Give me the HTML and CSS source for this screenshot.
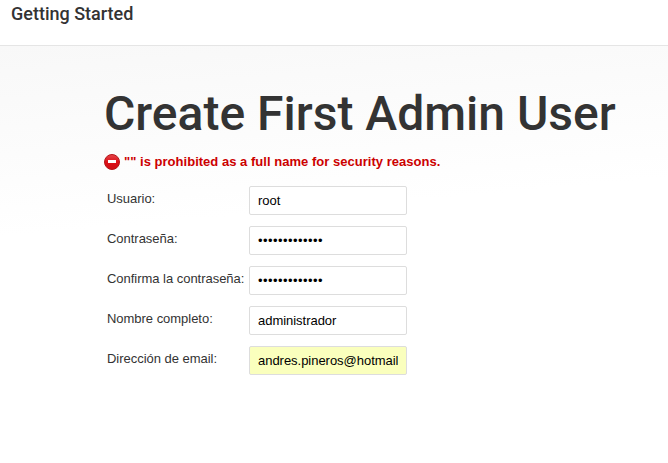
FILE: index.html
```html
<!DOCTYPE html>
<html lang="es">
<head>
<meta charset="utf-8">
<title>Getting Started</title>
<link rel="stylesheet" href="styles.css">
</head>
<body>
<header class="header"><h4 class="header-title">Getting Started</h4></header>
<main class="content">
  <h1 class="title">Create First Admin User</h1>
  <div class="error">
    <svg class="error-icon" width="16" height="16" viewBox="0 0 16 16" aria-hidden="true">
      <defs><linearGradient id="red" x1="0" y1="0" x2="0" y2="1"><stop offset="0" stop-color="#e6474b"/><stop offset=".5" stop-color="#dc1018"/><stop offset="1" stop-color="#d01016"/></linearGradient></defs>
      <circle cx="8" cy="8" r="7.5" fill="url(#red)" stroke="#b5161a"/>
      <rect x="4" y="6" width="8" height="3" fill="#fff"/>
    </svg>
    <span>"" is prohibited as a full name for security reasons.</span>
  </div>
  <form class="form">
    <label class="label" for="user">Usuario:</label>
    <input class="field" id="user" type="text" value="root">
    <label class="label" for="pass">Contraseña:</label>
    <input class="field password" id="pass" type="text" value="•••••••••••••">
    <label class="label" for="pass2">Confirma la contraseña:</label>
    <input class="field password" id="pass2" type="text" value="•••••••••••••">
    <label class="label" for="name">Nombre completo:</label>
    <input class="field" id="name" type="text" value="administrador">
    <label class="label" for="email">Dirección de email:</label>
    <input class="field autofilled" id="email" type="text" value="andres.pineros@hotmail">
  </form>
</main>
</body>
</html>
```
FILE: styles.css
```css
* { box-sizing: border-box; }
body {
  margin: 0;
  height: 463px;
  overflow: hidden;
  background: #fff;
  color: #333;
  font: 13px/18px "Liberation Sans", Arial, sans-serif;
}
.header {
  height: 46px;
  padding: 4px 11px;
  border-bottom: 1px solid #e5e5e5;
}
.header-title {
  margin: 0;
  font: 500 18px/20px Roboto, sans-serif;
}
.content {
  height: 417px;
  padding: 41px 0 0 104px;
  background: linear-gradient(175deg, #f8f8f8 0, #fff 190px);
}
.title {
  margin: 0;
  font: 500 48px/53px Roboto, sans-serif;
  white-space: nowrap;
}
.error {
  display: flex;
  align-items: center;
  gap: 4px;
  height: 18px;
  margin-top: 13px;
  color: #c00;
  font-weight: bold;
  letter-spacing: .025px;
  white-space: nowrap;
}
.form {
  display: grid;
  grid-template-columns: 142px 158px;
  grid-auto-rows: 29px;
  row-gap: 11px;
  margin: 15px 0 0 3px;
}
.label {
  padding-top: 4px;
  letter-spacing: -.03px;
  white-space: nowrap;
}
.field {
  width: 158px;
  height: 29px;
  margin: 0;
  padding: 0 8px;
  border: 1px solid #ddd;
  border-radius: 2px;
  outline: 0;
  background: #fff;
  color: #000;
  font: 13px "Liberation Sans", Arial, sans-serif;
  letter-spacing: -.03px;
}
.password { letter-spacing: .45px; }
.autofilled { background: #faffbd; }
```
